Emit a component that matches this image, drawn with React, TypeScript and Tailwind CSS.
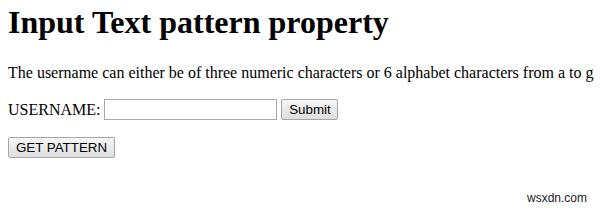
import React from "react";

const btn =
  "border border-[#a6a6a6] rounded-[2px] bg-gradient-to-b from-[#f7f7f7] to-[#dedede] text-[13.33px] leading-[16px] text-black px-[6px] [font-family:'Liberation_Sans',Arial,sans-serif]";

export default function App() {
  return (
    <div className="relative w-[600px] h-[210px] bg-white overflow-hidden px-[8px] text-black [font-family:'Liberation_Serif','Times_New_Roman',serif]">
      <h1 className="m-0 mt-[4px] text-[32px] leading-[36px] font-bold">Input Text pattern property</h1>
      <p className="m-0 mt-[24px] text-[16px] leading-[18px] whitespace-nowrap">
        The username can either be of three numeric characters or 6 alphabet characters from a to g
      </p>
      <form className="mt-[17px] flex items-center h-[21px] text-[16px]" onSubmit={(e) => e.preventDefault()}>
        <label>USERNAME:</label>
        <input
          type="text"
          className="ml-[4px] w-[173px] h-[21px] border border-[#a9a9a9] bg-white px-[2px] text-[13.33px] outline-none"
        />
        <button type="submit" className={btn + " ml-[4px] w-[57px] h-[21px]"}>
          Submit
        </button>
      </form>
      <div className="mt-[17px]">
        <button type="button" className={btn + " w-[107px] h-[21px] block"}>
          GET PATTERN
        </button>
      </div>
      <div className="absolute left-[527px] top-[191px] text-[12px] leading-[14px] text-[#222] [font-family:'Liberation_Sans',Arial,sans-serif]">
        wsxdn.com
      </div>
    </div>
  );
}
